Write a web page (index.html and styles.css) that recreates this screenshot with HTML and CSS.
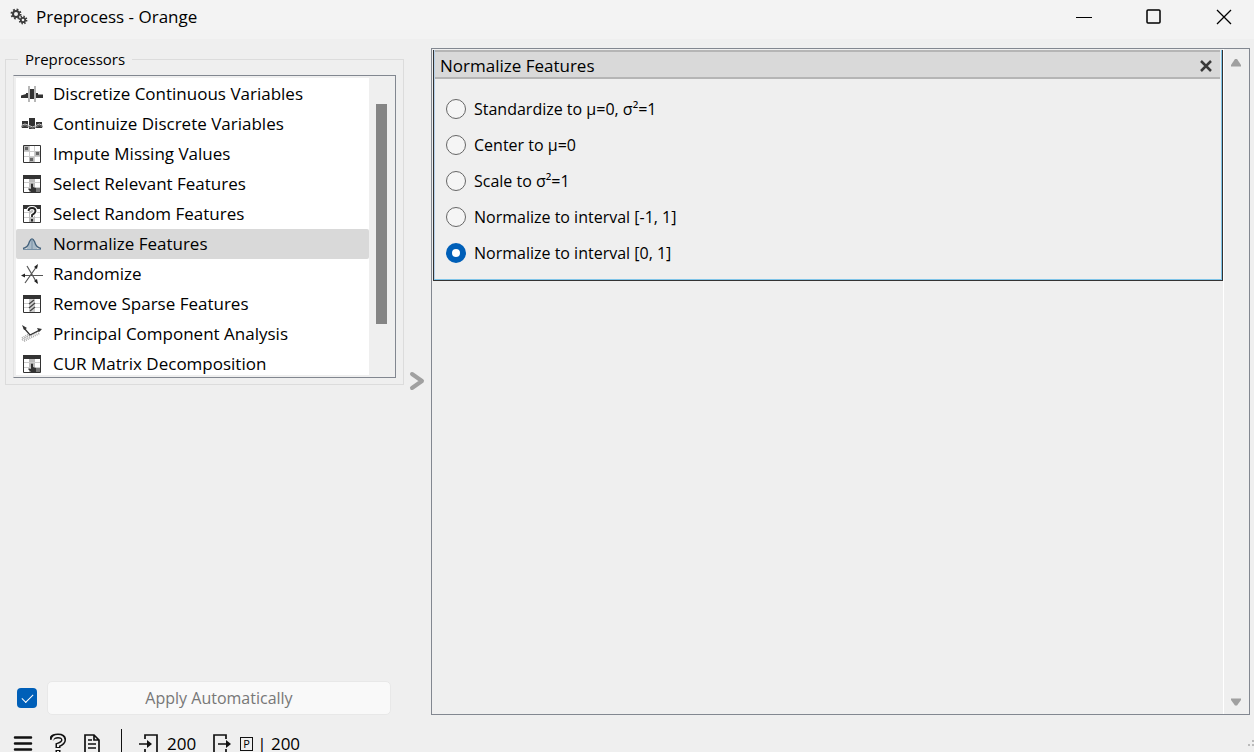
FILE: index.html
```html
<!DOCTYPE html>
<html lang="en">
<head>
<meta charset="utf-8">
<title>Preprocess - Orange</title>
<link rel="stylesheet" href="styles.css">
</head>
<body>
<svg class="defs" aria-hidden="true">
  <symbol id="table-hand" viewBox="0 0 18 18">
    <path fill="#fff" d="M0 0h18v18H0z"/><path fill="#bbb" d="M6 4h6v13H6z"/>
    <path stroke="#ccc" d="M1 7.500h16M1 12.500h16"/>
    <path fill="none" stroke="#333" d="M.5.5h17v17H.5z"/><path fill="#333" d="M0 0h18v4H0z"/>
    <path fill="#333" d="M8 9q1-1 2 0v3l3 1q1 1 0 4l-1 1H9l-4-4q0-1 3 0z"/><path fill="#777" d="M13 13h4v4h-4z"/>
  </symbol>
</svg>
<header class="titlebar">
  <svg class="gears" width="18" height="18" viewBox="0 0 18 18" fill="none" stroke="#3c3c3c">
    <circle cx="6" cy="6" r="3" stroke-width="2"/><circle cx="6" cy="6" r="4.500" stroke-width="2" stroke-dasharray="1.770 1.770"/>
    <circle cx="13" cy="12" r="2.200" stroke-width="1.800"/><circle cx="13" cy="12" r="3.500" stroke-width="1.800" stroke-dasharray="1.370 1.370"/>
  </svg>
  <h1 class="title">Preprocess - Orange</h1>
  <div class="window-buttons">
    <button aria-label="Minimize"><svg width="16" height="16" viewBox="0 0 16 16"><path d="M0 8.500h16"/></svg></button>
    <button aria-label="Maximize"><svg width="16" height="16" viewBox="0 0 16 16"><rect x="1" y="1" width="13" height="13" rx="1" stroke-width="1.500"/></svg></button>
    <button aria-label="Close"><svg width="16" height="16" viewBox="0 0 16 16"><path d="M1 1l14 14M15 1L1 15" stroke-width="1.300"/></svg></button>
  </div>
</header>
<main class="workspace">
  <section class="sidebar">
    <fieldset class="group">
      <legend>Preprocessors</legend>
      <div class="list-frame">
        <div class="list">
          <button class="item"><svg viewBox="0 0 22 18"><path fill="#333" d="M0 10.500l5-1.500V8h2v5H0zM15 8h2v1.500h5V13h-7zM9 4h4v10H9z"/><path stroke="#999" stroke-width="1.400" d="M8 1v16M14 1v16"/></svg>Discretize Continuous Variables</button>
          <button class="item"><svg viewBox="0 0 22 18"><path fill="#333" d="M1 6h6v7H1zM8 3h6v11H8zM15 7h6v6h-6z"/><path stroke="#ccc" fill="none" d="M0 10.500q4-3 8 0t7 0t7 0"/><path stroke="#777" fill="none" d="M0 12q4-3 8 0t7 0t7 0"/></svg>Continuize Discrete Variables</button>
          <button class="item"><svg viewBox="-2 0 22 18"><path fill="#fff" stroke="#333" d="M.5.5h17v17H.5z"/><path stroke="#ccc" d="M1 6.500h16M1 11.500h16M6.500 1v16M11.500 1v16"/><path fill="#bbb" d="M1 1h5v5H1zM12 6h5v5h-5zM6 12h5v5H6z"/><path fill="#666" d="M2 2h3v3H2zM13 7h3v3h-3zM7 13h3v3H7z"/></svg>Impute Missing Values</button>
          <button class="item"><svg viewBox="-2 0 22 18"><use href="#table-hand" width="18" height="18"/></svg>Select Relevant Features</button>
          <button class="item"><svg viewBox="-2 0 22 18"><path fill="#fff" stroke="#333" d="M.5.5h17v17H.5z"/><path stroke="#ccc" d="M1 7.500h16M1 12.500h16"/><path fill="#bbb" d="M6 4h6v13H6z"/><path fill="#333" d="M0 0h18v4H0z"/><path fill="none" stroke="#fff" stroke-width="4" d="M5.500 6q0-3 3.500-3t3.500 3q0 2-3.500 4v2"/><path fill="none" stroke="#222" stroke-width="1.800" d="M5.500 6q0-3 3.500-3t3.500 3q0 2-3.500 4v2M9 14v2.500"/></svg>Select Random Features</button>
          <button class="item selected"><svg viewBox="-2 0 22 18"><path fill="#a9bac7" d="M4 13q2-3 3-7 2-5 4 0 1 4 3 7v2H4z"/><path fill="none" stroke="#44627c" stroke-width="1.300" d="M0 13.500q5-1 6.500-7 2.500-5 5 0 1.500 6 6.500 7"/><path stroke="#7891a6" d="M0 14.500h18M9 4v11"/></svg>Normalize Features</button>
          <button class="item"><svg class="tall" viewBox="0 0 22 22"><path stroke="#555" stroke-width="1.200" d="M1 12.500h21M6 3l10 17M16 3L4 20"/><path fill="#222" d="M0 12.500l4-2v4zM17 1l-4 3 3 2zM17 21l-1-5-3 2z"/></svg>Randomize</button>
          <button class="item"><svg viewBox="-2 0 22 18"><path fill="#fff" stroke="#333" d="M.5.5h17v17H.5z"/><path stroke="#ccc" d="M1 8.500h16M1 12.500h16"/><path fill="#ccc" d="M6 4h6v13H6z"/><path fill="#333" d="M0 0h18v4H0z"/><path stroke="#444" stroke-width="1.300" d="M6 9l5-4M6 13l6-5M7 16l5-4"/></svg>Remove Sparse Features</button>
          <button class="item"><svg viewBox="0 0 22 18"><path stroke="#aaa" stroke-width="2" stroke-dasharray="1 1" d="M1 15L19 5M3 16L19 8M1 13l7-4"/><path fill="none" stroke="#333" stroke-width="1.300" d="M3 3l6 7 10-5"/><path fill="#333" d="M1 0l5 3-3 2zM21 4l-5-1 2 4z"/></svg>Principal Component Analysis</button>
          <button class="item"><svg viewBox="-2 0 22 18"><use href="#table-hand" width="18" height="18"/></svg>CUR Matrix Decomposition</button>
        </div>
        <div class="scrollbar"><div class="thumb"></div></div>
      </div>
    </fieldset>
    <div class="apply-row">
      <input type="checkbox" class="check" id="auto" aria-label="Apply automatically" checked>
      <button class="apply" disabled>Apply Automatically</button>
    </div>
  </section>
  <div class="splitter"><svg width="16" height="20" viewBox="0 0 16 20"><path fill="none" stroke="#a0a0a0" stroke-width="4" stroke-linecap="round" stroke-linejoin="round" d="M3 3l10 7-10 7"/></svg></div>
  <section class="flow">
    <div class="flow-body">
      <article class="card">
        <header class="card-head">
          <h2>Normalize Features</h2>
          <button aria-label="Remove"><svg width="12" height="12" viewBox="0 0 12 12"><path stroke="#383838" stroke-width="2.500" d="M1 1l10 10M11 1L1 11"/></svg></button>
        </header>
        <div class="options">
          <label><input type="radio" name="method">Standardize to μ=0, σ²=1</label>
          <label><input type="radio" name="method">Center to μ=0</label>
          <label><input type="radio" name="method">Scale to σ²=1</label>
          <label><input type="radio" name="method">Normalize to interval [-1, 1]</label>
          <label><input type="radio" name="method" checked>Normalize to interval [0, 1]</label>
        </div>
      </article>
    </div>
    <div class="flow-scroll">
      <svg width="10" height="8" viewBox="0 0 10 8"><path fill="#a0a0a0" d="M4 0h2l4 6v1.500H0V6z"/></svg>
      <svg width="10" height="8" viewBox="0 0 10 8"><path fill="#a0a0a0" d="M0 .5h10V2L6 7.500H4L0 2z"/></svg>
    </div>
  </section>
</main>
<footer class="status">
  <button aria-label="Menu"><svg width="20" height="20" viewBox="0 0 20 20"><path stroke="#111" stroke-width="2.500" stroke-linecap="round" d="M2 3.500h16M2 9.500h16M2 15.500h16"/></svg></button>
  <button aria-label="Help"><svg width="16" height="22" viewBox="0 0 16 22"><path fill="none" stroke="#111" stroke-width="5" d="M1.500 7Q2 3 8 3t5.500 4q0 3-5.500 5v3M8 17v5"/><path fill="none" stroke="#efefef" stroke-width="2" d="M2.500 7Q3 3 8 3t5.500 4q0 3-5.500 5v2M8 18v3"/></svg></button>
  <button aria-label="Report"><svg width="18" height="22" viewBox="0 0 18 22"><path fill="none" stroke="#111" stroke-width="1.700" d="M2 2h9l5 5v13H2zM11 2v5h5M5 7h4M5 11h8M5 15h8"/></svg></button>
  <span class="divider"></span>
  <span class="count"><svg width="20" height="22" viewBox="0 0 20 22"><path fill="none" stroke="#111" stroke-width="1.700" d="M6 6V2h12v18H6v-4M0 11h10"/><path fill="#111" d="M8 7l5 4-5 4z"/></svg>200</span>
  <span class="count output"><svg width="20" height="22" viewBox="0 0 20 22"><path fill="none" stroke="#111" stroke-width="1.700" d="M14 6V2H2v18h12v-4M6 11h10"/><path fill="#111" d="M14 7l5 4-5 4z"/></svg><span class="partial">P</span><span>| 200</span></span>
  <svg class="grip" width="6" height="8" viewBox="0 0 6 8"><path fill="#bbb" d="M4 0h2v2H4zM0 4h2v2H0zM4 4h2v2H4z"/></svg>
</footer>
</body>
</html>
```
FILE: styles.css
```css
* { box-sizing: border-box; }
body {
  margin: 0;
  height: 100vh;
  overflow: hidden;
  display: flex;
  flex-direction: column;
  background: #efefef;
  color: #000;
  font: 17px/24px "Open Sans", "Noto Sans", sans-serif;
}
button { font: inherit; color: inherit; border: 0; padding: 0; background: none; }
h1, h2 { margin: 0; font: inherit; }
svg { display: block; flex: none; }
.defs { position: absolute; width: 0; height: 0; }

.titlebar {
  display: flex;
  align-items: flex-start;
  flex: 0 0 39px;
  padding-left: 10px;
  background: #f3f3f3;
}
.gears { margin: 8px 8px 0 0; }
.title { padding-top: 5px; flex: 1; }
.window-buttons { display: flex; }
.window-buttons button { width: 70px; height: 33px; display: grid; place-items: center; }
.window-buttons button:last-child { width: 60px; margin-left: 5px; }
.window-buttons svg { fill: none; stroke: #000; }

.workspace {
  flex: 1;
  min-height: 0;
  display: grid;
  grid-template-columns: 399px 27px minmax(0, 1fr);
  padding: 9px 4px 14px 5px;
}
.sidebar { display: flex; flex-direction: column; justify-content: space-between; }
.group { margin: 0; padding: 5px 7px 6px; border: 1px solid #dcdcdc; }
.group legend { margin-left: 5px; padding: 0 7px; line-height: 22px; font-size: 15px; }
.list-frame {
  display: flex;
  height: 303px;
  padding: 2px;
  border: 1px solid #828790;
  border-left-color: #e3e3e3;
}
.list { flex: 1; overflow: hidden; padding-top: 1px; background: #fff; }
.item {
  display: flex;
  align-items: center;
  gap: 10px;
  width: 100%;
  height: 30px;
  padding-left: 5px;
  text-align: left;
  white-space: nowrap;
}
.item svg { width: 22px; height: 18px; }
.item .tall { height: 22px; }
.selected { background: #d9d9d9; border-radius: 2px; }
.scrollbar { width: 24px; padding: 26px 0 0 7px; }
.thumb { width: 11px; height: 220px; background: #858585; }

.apply-row { display: flex; align-items: center; gap: 10px; padding: 0 13px 0 12px; }
.check {
  appearance: none;
  width: 20px;
  height: 20px;
  margin: 0;
  border-radius: 4px;
  background: #005fb8;
  display: grid;
  place-items: center;
}
.check:checked::before {
  content: "";
  width: 10px;
  height: 5px;
  margin-bottom: 3px;
  border: solid #fff;
  border-width: 0 0 1px 1px;
  transform: rotate(-45deg);
}
.apply {
  flex: 1;
  height: 34px;
  font-size: 16px;
  color: #777;
  background: #f9f9f9;
  border: 1px solid #e8e8e8;
  border-radius: 5px;
}
.splitter { display: grid; place-items: center; padding: 0 1px 1px 0; }

.flow { display: flex; border: 1px solid #828790; }
.flow-body { flex: 1; padding: 1px 0 0 1px; border-right: 1px solid #fff; }
.card {
  border: 1px solid #333;
  border-top: 0;
  box-shadow: inset -1px -1px #7fc4e8, inset 1px 0 #b5cfe8;
  padding: 0 2px 2px 1px;
}
.card-head {
  display: flex;
  align-items: center;
  justify-content: space-between;
  height: 29px;
  padding: 2px 8px 0 5px;
  border-top: 2px solid #b5b5b5;
  border-bottom: 2px solid #b5b5b5;
  background: #d9d9d9;
}
.options { display: grid; gap: 12px; padding: 18px 11px 13px; }
.options label { display: flex; align-items: center; gap: 8px; font-size: 16px; }
.options input {
  appearance: none;
  width: 20px;
  height: 20px;
  margin: 0;
  border: 1px solid #666;
  border-radius: 50%;
  background: #f5f5f5;
}
.options input:checked { border: 6px solid #005fb8; background: #fff; }
.flow-scroll {
  width: 25px;
  display: flex;
  flex-direction: column;
  justify-content: space-between;
  align-items: center;
  padding: 10px 1px 8px 0;
}

.status {
  display: flex;
  align-items: center;
  flex: 0 0 29px;
  margin-bottom: -6px;
  padding-left: 13px;
}
.status button + button { margin-left: 17px; }
.divider { width: 1px; height: 29px; margin: 0 17px 0 20px; background: #111; }
.count { display: flex; align-items: center; gap: 8px; }
.output { margin-left: 16px; gap: 4px; }
.partial { width: 13px; height: 14px; margin-left: 4px; border: 1px solid #111; font-size: 11px; line-height: 12px; text-align: center; }
.grip { margin-left: auto; }
```
